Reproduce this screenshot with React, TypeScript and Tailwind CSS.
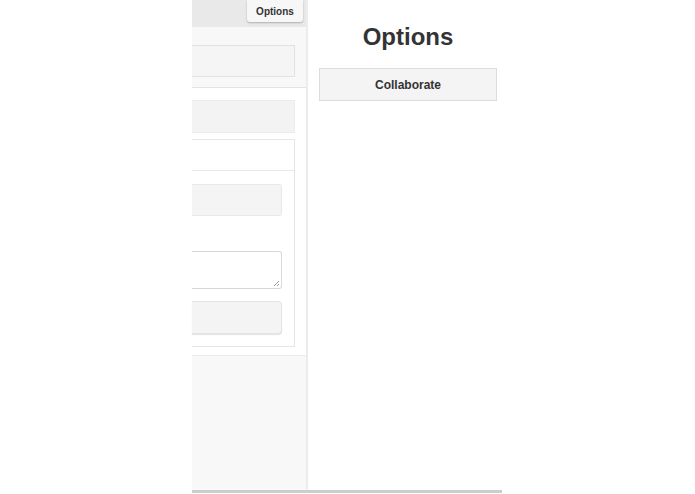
export default function App() {
  return (
    <div className="w-[695px] h-[494px] bg-white overflow-hidden flex font-['Liberation_Sans',Arial,sans-serif] text-[#333]">
      <div className="w-[192px] shrink-0" />
      <div className="w-[310px] shrink-0 flex flex-col">
        <div className="h-[490px] flex">
          {/* left editor column, clipped */}
          <div className="w-[114px] flex flex-col bg-[#f8f8f8]">
            <div className="h-[27px] bg-[#e9e9e9] flex justify-end pr-[3px]">
              <div className="w-[56px] h-[22px] bg-[#f7f7f7] rounded-b-[3px] shadow-[0_1px_2px_rgba(0,0,0,0.25)] flex items-center justify-center text-[10px] font-bold text-[#333]">
                Options
              </div>
            </div>
            <div className="h-[61px] pt-[18px] pr-[11px] border-b border-[#e4e4e4]">
              <div className="h-[32px] bg-[#f5f5f5] border border-[#e2e2e2] border-l-0" />
            </div>
            <div className="bg-white pt-[12px] pr-[11px] pb-[8px]">
              <div className="h-[33px] bg-[#f3f3f3] border border-[#ececec] border-l-0" />
              <div className="mt-[6px] h-[208px] border border-[#e6e6e6] border-l-0 flex flex-col">
                <div className="h-[31px] border-b border-[#e8e8e8]" />
                <div className="pr-[12px] pt-[13px]">
                  <div className="h-[32px] bg-[#f4f4f4] border border-[#e8e8e8] border-l-0 rounded-r-[3px]" />
                  <div className="mt-[35px] h-[38px] bg-white border border-[#d8d8d8] border-l-0 rounded-r-[3px] relative">
                    <svg className="absolute right-[1px] bottom-[1px]" width="7" height="7" viewBox="0 0 7 7">
                      <path d="M6 1L1 6M6 4L4 6" stroke="#999" strokeWidth="1" />
                    </svg>
                  </div>
                  <div className="mt-[12px] h-[33px] bg-[#f4f4f4] border border-[#e4e4e4] border-l-0 rounded-r-[4px] shadow-[0_1px_1px_rgba(0,0,0,0.12)]" />
                </div>
              </div>
            </div>
            <div className="flex-1 border-t border-[#ececec]" />
          </div>
          <div className="w-[2px] bg-[#ececec]" />
          {/* right options panel */}
          <div className="w-[194px] pl-[11px] pr-[5px] flex flex-col items-center">
            <h1 className="mt-[22px] text-[24px] leading-[30px] font-bold text-[#333]">Options</h1>
            <button className="mt-[16px] w-full h-[33px] bg-[#f4f4f4] border border-[#dcdcdc] text-[12px] font-bold text-[#333]">
              Collaborate
            </button>
          </div>
        </div>
        <div className="h-[3px] bg-[#cdcdcd]" />
      </div>
    </div>
  );
}
